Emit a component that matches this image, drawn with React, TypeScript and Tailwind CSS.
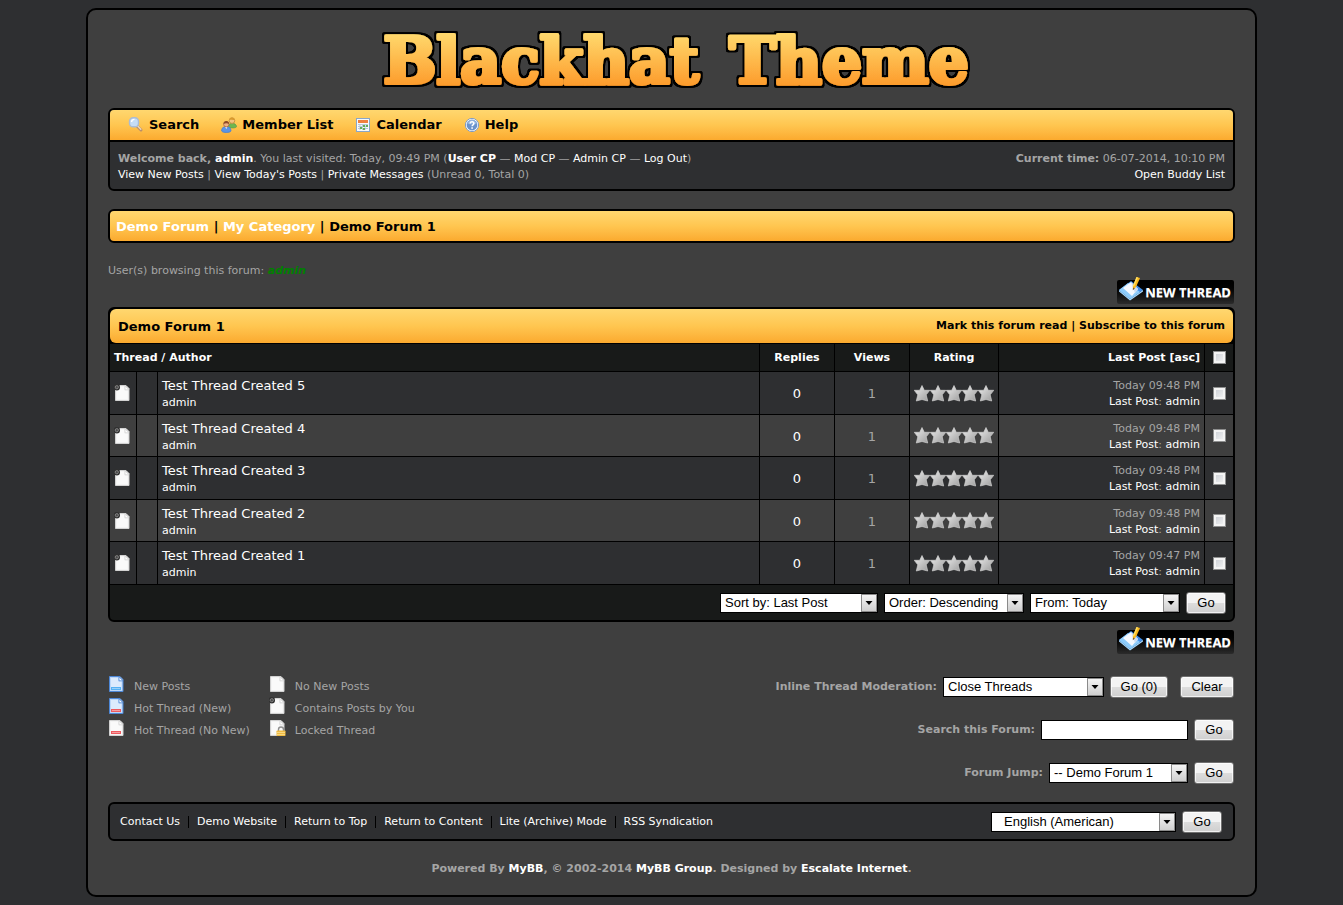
import type { ReactNode } from "react";

const barGradient = "bg-linear-to-b from-[#ffd76f] via-[#ffc650] to-[#fbaa2e]";

function Logo() {
  return (
    <h1 className="flex justify-center">
      <svg width="620" height="98" viewBox="0 0 620 98" role="img" aria-label="Blackhat Theme">
        <defs>
          <linearGradient id="logoFill" gradientUnits="userSpaceOnUse" x1="0" y1="24" x2="0" y2="76">
            <stop offset="0" stopColor="#ffd86c" />
            <stop offset="1" stopColor="#fd9b2b" />
          </linearGradient>
          <filter id="logoOutline" x="-5%" y="-20%" width="110%" height="140%">
            <feMorphology in="SourceAlpha" operator="dilate" radius="1.5" result="fat" />
            <feGaussianBlur in="fat" stdDeviation="0.5" result="soft" />
            <feMerge>
              <feMergeNode in="soft" />
              <feMergeNode in="soft" />
              <feMergeNode in="SourceGraphic" />
            </feMerge>
          </filter>
        </defs>
        <text
          y="73"
          textAnchor="middle"
          className="font-['DejaVu_Serif',serif] text-[63px] font-bold"
          fill="url(#logoFill)"
          stroke="url(#logoFill)"
          strokeWidth="4"
          strokeLinejoin="round"
          filter="url(#logoOutline)"
        >
          <tspan x="179">Blackhat</tspan>
          <tspan x="487">Theme</tspan>
        </text>
      </svg>
    </h1>
  );
}

function SearchIcon() {
  return (
    <svg width="16" height="16" viewBox="0 0 16 16" aria-hidden="true">
      <path d="M9 9l4 4" stroke="#b98f6c" strokeWidth="3" strokeLinecap="round" />
      <path d="M9.2 8.6l3.6 3.6" stroke="#ecd9bd" strokeWidth="1.4" strokeLinecap="round" />
      <rect x="1.500" y=".8" width="9" height="9" rx="3.600" fill="#c6ddf6" stroke="#a9bcd6" strokeWidth="1.400" />
      <path d="M3.500 5a3 3 0 013-2.600" stroke="#fff" strokeWidth="1.4" fill="none" />
    </svg>
  );
}

function MembersIcon() {
  return (
    <svg width="16" height="16" viewBox="0 0 16 16" aria-hidden="true">
      <path d="M7.5 10.5c0-3 1.4-4.2 3.6-4.2S15.500 7.500 15.500 9.600c0 .8-1.500 1.300-4 1.300z" fill="#6fb64f" stroke="#5f9f4c" strokeWidth=".8" />
      <circle cx="11" cy="3.600" r="2.800" fill="#f3c281" stroke="#c08a3c" strokeWidth=".8" />
      <path d="M8.200 3.200C8.400 1 9.800.4 11 .4s2.700.8 2.800 2.800c-1.500-.6-4-.8-5.600 0z" fill="#d99a2b" />
      <path d="M.6 14c0-3 1.600-4.400 4.600-4.400S10 11 10 14c-1.500 2-8 2-9.400 0z" fill="#5b94e6" stroke="#4a7fcf" strokeWidth=".8" />
      <path d="M4 9.600l1.300 2.400 1.300-2.400z" fill="#fff" />
      <circle cx="5.300" cy="7.200" r="2.700" fill="#efb083" stroke="#a8683f" strokeWidth=".8" />
      <path d="M2.500 7c.1-2 1.300-2.900 2.800-2.900S8 5 8.100 7c-1.600-.9-4-.9-5.600 0z" fill="#8f4b26" />
    </svg>
  );
}

function CalendarIcon() {
  return (
    <svg width="16" height="16" viewBox="0 0 16 16" aria-hidden="true">
      <rect x="1.500" y="1.500" width="13" height="13" fill="#f7fafd" stroke="#8aa6c8" />
      <rect x="3" y="3" width="10" height="3" fill="#ef7f3e" />
      <path d="M3 7.500h10M3 9.500h10M3 11.500h10M5 7v6M7.500 7v6M10 7v6" stroke="#b9c8da" strokeWidth="1" />
      <path d="M8 8h2v2H8zM11 8h2v2h-2zM5 10h2v2H5zM8 11h2v2H8z" fill="#64ad55" />
    </svg>
  );
}

function HelpIcon() {
  return (
    <svg width="16" height="16" viewBox="0 0 16 16" aria-hidden="true">
      <circle cx="8" cy="8" r="6.600" fill="#fff" stroke="#7f9cc6" strokeWidth="1" />
      <circle cx="8" cy="8" r="5.400" fill="#6a93cc" />
      <path d="M3.200 6.500a5 5 0 019.600 0c-3 1.300-6.500 1.300-9.600 0z" fill="#93b4df" />
      <path d="M6.200 6.500c0-2.400 3.700-2.300 3.700 0 0 1.400-1.800 1.400-1.800 2.800" stroke="#fff" strokeWidth="1.500" fill="none" />
      <rect x="7.300" y="10.300" width="1.600" height="1.500" fill="#fff" />
    </svg>
  );
}

type Mark = "line-blue" | "line-red" | "dot" | "lock" | "none";

function PageIcon({ tint = "white", mark = "none" }: { tint?: "white" | "blue"; mark?: Mark }) {
  const edge = tint === "blue" ? "#4d87d6" : "#d2d2d2";
  const fill = tint === "blue" ? "#bcd7f8" : "#f4f4f4";
  return (
    <svg width="18" height="18" viewBox="-1 -1 18 18" aria-hidden="true" className="shrink-0">
      <path d="M.5.5h10.500l3 3v12H.5z" fill={fill} stroke={edge} />
      <path d="M2 2h7v3.500h3.500V14H2z" fill={tint === "blue" ? "#dcebfd" : "#fafafa"} />
      <path d="M10 .8v4h4z" fill="#fff" stroke={edge} strokeWidth=".8" />
      {mark === "line-blue" && <path d="M2 11h10v3H2z" fill="#55b1f3" />}
      {mark === "line-red" && <path d="M2 11h10v3H2z" fill="#ee5a5f" />}
      {(mark === "line-blue" || mark === "line-red") && <path d="M3 12.500h8" stroke="#fff" strokeOpacity=".4" />}
      {mark === "dot" && (
        <g>
          <circle cx="1.800" cy="2.200" r="3.200" fill="#303030" />
          <circle cx="1.800" cy="2.200" r="1.600" fill="#4a4a4a" stroke="#868686" strokeWidth=".9" />
        </g>
      )}
      {mark === "lock" && (
        <g>
          <path d="M8.500 11V9.500a2.500 2.500 0 015 0V11" fill="none" stroke="#8f8f8f" strokeWidth="1.400" />
          <rect x="6.500" y="10.500" width="9" height="5.500" rx=".8" fill="#f0bb42" />
          <path d="M7 12.500h8M7 14.500h8" stroke="#fbdf92" strokeWidth=".8" />
        </g>
      )}
    </svg>
  );
}

function Stars() {
  return (
    <svg width="80" height="17" viewBox="0 0 80 17" role="img" aria-label="Not rated" className="mx-auto block">
      <defs>
        <linearGradient id="star" x1="0" y1="0" x2="1" y2="1">
          <stop offset="0" stopColor="#eeeeee" />
          <stop offset="1" stopColor="#9a9a9a" />
        </linearGradient>
      </defs>
      {[0, 16, 32, 48, 64].map((x) => (
        <path
          key={x}
          transform={`translate(${x} 0)`}
          d="M8 .5l2.300 4.800h5.500l-3.600 4.500 1.500 6.200L8 14.500l-5.700 1.500 1.500-6.200L.2 5.300h5.500z"
          fill="url(#star)"
          stroke="#cfcfcf"
          strokeWidth=".7"
        />
      ))}
    </svg>
  );
}

function NewThread() {
  return (
    <div className="flex justify-end pr-px">
      <a
        href="#new-thread"
        className="relative flex h-6 w-[117px] items-center justify-end rounded-xs bg-linear-to-b from-black to-[#2b2b2b] pr-[3px] font-['Open_Sans',sans-serif] text-[13px] font-bold text-white text-shadow-2xs text-shadow-white/50"
      >
        <svg width="26" height="26" viewBox="0 0 26 26" aria-hidden="true" className="absolute -top-1 left-px">
          <path d="M1 14L13 5l12 9-13 9z" fill="#3f8eea" />
          <path d="M1 14v1.500L12 24.500 25 15.500V14l-13 9z" fill="#a9daff" />
          <path d="M1 14l9-7 12 9-10 7z" fill="#8ccbfb" />
          <path d="M5 12l8-6 7 7-6 7z" fill="#f4f8ff" />
          <path d="M13 6l7 7-3 4z" fill="#cfdcf2" />
          <path d="M18.500 1l3.500 1-4 9-3 3-.2-4z" fill="#f9b81c" />
          <path d="M18.500 1l1.500.5-4 9-1.200-.5z" fill="#ffe066" />
          <path d="M15 11.500l-.2 2.700 2-1.700z" fill="#6b5a3a" />
        </svg>
        NEW THREAD
      </a>
    </div>
  );
}

function Select({ label, options, width, indent = "pl-1" }: { label: string; options: string[]; width: string; indent?: string }) {
  return (
    <span className={`relative inline-flex h-5 ${width}`}>
      <select
        aria-label={label}
        className={`h-5 w-full appearance-none border border-black bg-white ${indent} pr-4 font-['Liberation_Sans',Arial,sans-serif] text-[13px] font-normal text-black`}
      >
        {options.map((o) => (
          <option key={o}>{o}</option>
        ))}
      </select>
      <span className="pointer-events-none absolute inset-y-px right-px flex w-4 items-center justify-center border border-[#8a8a8a] bg-linear-to-b from-[#f4f4f4] to-[#cfcfcf]">
        <svg width="8" height="4" viewBox="0 0 8 4" aria-hidden="true">
          <path d="M.5 0h7L4 4z" fill="#000" />
        </svg>
      </span>
    </span>
  );
}

function Button({ children, width = "w-10" }: { children: ReactNode; width?: string }) {
  return (
    <button
      type="button"
      className={`h-[22px] ${width} rounded-[3px] border border-[#707070] bg-linear-to-b from-[#f3f3f3] from-50% via-[#dddddd] via-50% to-[#cfcfcf] font-['Liberation_Sans',Arial,sans-serif] text-[13px] leading-5 font-normal text-black inset-ring inset-ring-white/70`}
    >
      {children}
    </button>
  );
}

function Check({ label }: { label: string }) {
  return (
    <input
      type="checkbox"
      aria-label={label}
      className="mx-auto block size-[13px] appearance-none border border-[#8e8f8f] bg-linear-to-br from-[#c9cdd3] to-[#f6f6f6] inset-ring-2 inset-ring-[#f4f4f4] checked:from-[#5577aa]"
    />
  );
}

const nav = [
  { label: "Search", icon: <SearchIcon /> },
  { label: "Member List", icon: <MembersIcon /> },
  { label: "Calendar", icon: <CalendarIcon /> },
  { label: "Help", icon: <HelpIcon /> },
];

const threads = [
  { id: 5, time: "Today 09:48 PM" },
  { id: 4, time: "Today 09:48 PM" },
  { id: 3, time: "Today 09:48 PM" },
  { id: 2, time: "Today 09:48 PM" },
  { id: 1, time: "Today 09:47 PM" },
];

const legend: { label: string; icon: ReactNode }[][] = [
  [
    { label: "New Posts", icon: <PageIcon tint="blue" mark="line-blue" /> },
    { label: "Hot Thread (New)", icon: <PageIcon tint="blue" mark="line-red" /> },
    { label: "Hot Thread (No New)", icon: <PageIcon mark="line-red" /> },
  ],
  [
    { label: "No New Posts", icon: <PageIcon /> },
    { label: "Contains Posts by You", icon: <PageIcon mark="dot" /> },
    { label: "Locked Thread", icon: <PageIcon mark="lock" /> },
  ],
];

const footerLinks = ["Contact Us", "Demo Website", "Return to Top", "Return to Content", "Lite (Archive) Mode", "RSS Syndication"];

function A({ children, className = "text-white" }: { children: ReactNode; className?: string }) {
  return (
    <a href="#" className={className}>
      {children}
    </a>
  );
}

export default function App() {
  return (
    <div className="min-h-screen bg-[#2e2f31] px-[86px] py-2 font-[Verdana,'DejaVu_Sans',sans-serif] text-[11px] leading-4 text-[#a5a5a5]">
      <div className="rounded-[10px] border-2 border-black bg-[#3f3f3f] px-5 pb-[18px]">
        <Logo />

        <header className="overflow-hidden rounded-md border-2 border-black bg-[#2e2f31]">
          <nav className={`flex h-8 items-center gap-[22px] border-b-2 border-black pl-[18px] text-[13px] font-bold ${barGradient}`}>
            {nav.map((n) => (
              <a key={n.label} href="#" className="flex items-center gap-[5px] text-black">
                {n.icon}
                {n.label}
              </a>
            ))}
          </nav>
          <div className="flex justify-between px-2 pt-[9px] pb-1.5">
            <div>
              <p>
                <b>
                  Welcome back, <A>admin</A>
                </b>
                . You last visited: Today, 09:49 PM (
                <A className="font-bold text-white">User CP</A> — <A>Mod CP</A> — <A>Admin CP</A> — <A>Log Out</A>)
              </p>
              <p>
                <A>View New Posts</A> | <A>View Today's Posts</A> | <A>Private Messages</A> (Unread 0, Total 0)
              </p>
            </div>
            <div className="text-right">
              <p>
                <b>Current time:</b> 06-07-2014, 10:10 PM
              </p>
              <p>
                <A>Open Buddy List</A>
              </p>
            </div>
          </div>
        </header>

        <div className={`mt-[18px] flex h-[34px] items-center rounded-md border-2 border-black px-1.5 pt-px text-[13px] font-bold text-black ${barGradient}`}>
          <p>
            <A>Demo Forum</A> | <A>My Category</A> | Demo Forum 1
          </p>
        </div>

        <p className="mt-5 mb-px">
          User(s) browsing this forum: <A className="font-bold text-[#008000] italic">admin</A>
        </p>
        <NewThread />

        <section className="mt-[3px] overflow-hidden rounded-md border-2 border-black bg-black">
          <div className={`mb-px flex h-[34px] items-center justify-between rounded-md px-2 pt-px font-bold text-black ${barGradient}`}>
            <h2 className="text-[13px]">Demo Forum 1</h2>
            <p className="pb-0.5">
              <A className="text-black">Mark this forum read</A> | <A className="text-black">Subscribe to this forum</A>
            </p>
          </div>
          <table className="w-full table-fixed border-separate border-spacing-0">
            <colgroup>
              <col className="w-[26px]" />
              <col className="w-[21px]" />
              <col />
              <col className="w-[75px]" />
              <col className="w-[75px]" />
              <col className="w-[89px]" />
              <col className="w-[206px]" />
              <col className="w-[29px]" />
            </colgroup>
            <thead>
              <tr className="h-7 bg-[#181a19] text-white [&>th]:border-b [&>th]:border-black [&>th+th]:border-l">
                <th colSpan={3} className="px-1 text-left">
                  <A>Thread</A> / <A>Author</A>
                </th>
                <th>
                  <A>Replies</A>
                </th>
                <th>
                  <A>Views</A>
                </th>
                <th>
                  <A>Rating</A>
                </th>
                <th className="px-1 text-right">
                  <A>Last Post</A> [<A>asc</A>]
                </th>
                <th>
                  <Check label="Select all threads" />
                </th>
              </tr>
            </thead>
            <tbody>
              {threads.map((t) => (
                <tr key={t.id} className="h-[43px] bg-[#2e2f31] even:h-[42px] even:bg-[#3f3f3f] [&>td]:border-b [&>td]:border-black [&>td+td]:border-l">
                  <td className="pl-1">
                    <PageIcon mark="dot" />
                  </td>
                  <td />
                  <td className="px-1 pt-0.5">
                    <A className="block text-[13px] leading-[18px] text-white">Test Thread Created {t.id}</A>
                    <A className="block text-white">admin</A>
                  </td>
                  <td className="pt-0.5 text-center text-[13px]">
                    <A>0</A>
                  </td>
                  <td className="pt-0.5 text-center text-[13px]">1</td>
                  <td>
                    <Stars />
                  </td>
                  <td className="px-1 pt-0.5 text-right">
                    {t.time}
                    <br />
                    <A>Last Post</A>: <A>admin</A>
                  </td>
                  <td>
                    <Check label={`Select thread ${t.id}`} />
                  </td>
                </tr>
              ))}
            </tbody>
          </table>
          <div className="flex h-[35px] items-center justify-end gap-1.5 bg-[#181a19] pr-[7px]">
            <Select label="Sort by" options={["Sort by: Last Post"]} width="w-[158px]" />
            <Select label="Order" options={["Order: Descending"]} width="w-[140px]" />
            <Select label="From" options={["From: Today"]} width="w-[150px]" />
            <Button>Go</Button>
          </div>
        </section>

        <div className="mt-2">
          <NewThread />
        </div>

        <div className="mt-[21px] flex justify-between">
          <div className="flex gap-[19px]">
            {legend.map((col) => (
              <ul key={col[0].label}>
                {col.map((l) => (
                  <li key={l.label} className="flex h-[22px] items-start gap-2 leading-6">
                    {l.icon}
                    {l.label}
                  </li>
                ))}
              </ul>
            ))}
          </div>
          <div className="flex flex-col items-end gap-[21px] pt-px pr-px font-bold">
            <div className="flex items-center gap-1.5">
              Inline Thread Moderation:
              <Select label="Inline Thread Moderation" options={["Close Threads"]} width="w-[161px]" />
              <Button width="w-[58px]">Go (0)</Button>
              <span className="ml-1.5 flex">
                <Button width="w-[54px]">Clear</Button>
              </span>
            </div>
            <div className="flex items-center gap-1.5">
              <label htmlFor="forum-search">Search this Forum:</label>
              <input id="forum-search" type="text" className="h-5 w-[147px] border border-black bg-white px-1 text-black" />
              <Button>Go</Button>
            </div>
            <div className="flex items-center gap-1.5">
              Forum Jump:
              <Select label="Forum Jump" options={["-- Demo Forum 1"]} width="w-[139px]" />
              <Button>Go</Button>
            </div>
          </div>
        </div>

        <footer>
          <div className="mt-[18px] flex h-[39px] items-center justify-between rounded-md border-2 border-black bg-[#2e2f31] pr-[11px] pl-2.5">
            <div className="flex items-center pt-px">
              {footerLinks.map((l, i) => (
                <span key={l} className="flex items-center">
                  {i > 0 && <span className="mx-2 h-3 w-px bg-black" />}
                  <A>{l}</A>
                </span>
              ))}
            </div>
            <div className="flex items-center gap-1.5">
              <Select label="Language" options={["English (American)"]} width="w-[185px]" indent="pl-3" />
              <Button>Go</Button>
            </div>
          </div>
          <p className="mt-5 text-center font-bold">
            Powered By <A>MyBB</A>, © 2002-2014 <A>MyBB Group</A>. Designed by <A>Escalate Internet</A>.
          </p>
        </footer>
      </div>
    </div>
  );
}
